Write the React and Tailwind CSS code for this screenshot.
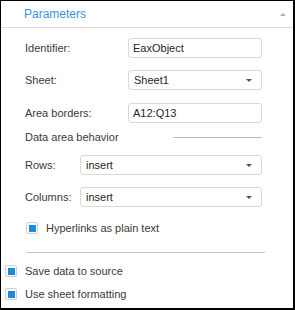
// панель параметров — форма объекта таблицы
function Field({ label, labelW, children, className = '' }) {
  return (
    <div className={`flex items-center ${className}`}>
      <span className="shrink-0 text-[#3a3a3a]" style={{ width: labelW }}>{label}</span>
      {children}
    </div>
  )
}

function TextBox({ value, w }) {
  return (
    <div className="flex h-5 items-center rounded-[3px] border border-[#d9d9d9] bg-white pl-[4px] text-[#262626]" style={{ width: w }}>
      {value}
    </div>
  )
}

function SelectBox({ value, w }) {
  return (
    <div className="flex h-5 items-center justify-between rounded-[3px] border border-[#d9d9d9] bg-white pl-[5px] pr-[9px] text-[#262626]" style={{ width: w }}>
      <span>{value}</span>
      <span className="h-0 w-0 border-x-[3px] border-t-[3px] border-x-transparent border-t-[#555]" />
    </div>
  )
}

function Check({ label, className = '' }) {
  return (
    <div className={`flex h-[14px] items-center ${className}`}>
      <span className="flex h-3 w-3 items-center justify-center rounded-[2px] border border-[#cfcfcf] bg-white">
        <span className="h-[7px] w-[7px] bg-[#1f8ad6]" />
      </span>
      <span className="ml-[8px] text-[#3a3a3a]">{label}</span>
    </div>
  )
}

export default function App() {
  return (
    <div className="h-[310px] w-[295px] overflow-hidden border-b-2 border-l border-r-2 border-t border-black bg-white text-[11px] leading-none" style={{ fontFamily: '"Liberation Sans", Arial, sans-serif' }}>
      <div className="flex h-[27px] items-center justify-between border-b border-[#dcdcdc] pl-[23px] pr-[7px]">
        <span className="text-[12px] text-[#3b94da]">Parameters</span>
        <span className="h-0 w-0 border-x-[3px] border-b-[3px] border-x-transparent border-b-[#b0b0b0]" />
      </div>

      <div className="pl-[24px]">
        <Field label="Identifier:" labelW={103} className="mt-[10px]">
          <TextBox value="EaxObject" w={134} />
        </Field>
        <Field label="Sheet:" labelW={103} className="mt-[12px]">
          <SelectBox value="Sheet1" w={134} />
        </Field>
        <Field label="Area borders:" labelW={103} className="mt-[13px]">
          <TextBox value="A12:Q13" w={134} />
        </Field>

        <div className="mt-[7px] flex h-[14px] items-center">
          <span className="text-[#3a3a3a]">Data area behavior</span>
          <span className="ml-auto mr-[31px] h-px w-[89px] bg-[#bdbdbd]" />
        </div>

        <Field label="Rows:" labelW={55} className="mt-[11px]">
          <SelectBox value="insert" w={182} />
        </Field>
        <Field label="Columns:" labelW={55} className="mt-[12px]">
          <SelectBox value="insert" w={182} />
        </Field>

        <Check label="Hyperlinks as plain text" className="mt-[14px] pl-[1px]" />

        <div className="ml-[1px] mt-[17px] h-px w-[239px] bg-[#c4c4c4]" />
      </div>

      <div className="pl-[4px]">
        <Check label="Save data to source" className="mt-[11px]" />
        <Check label="Use sheet formatting" className="mt-[9px]" />
      </div>
    </div>
  )
}
